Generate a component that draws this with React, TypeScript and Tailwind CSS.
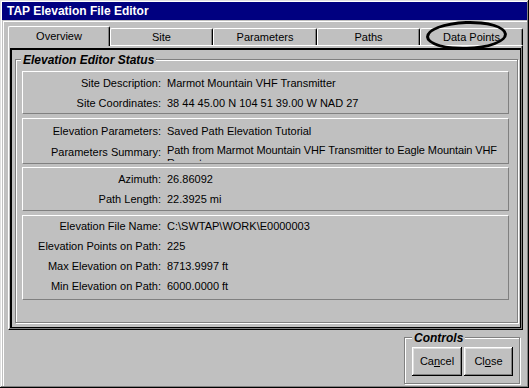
import React from "react";

const raised =
  "shadow-[inset_-1px_-1px_#000,inset_1px_1px_#dfdfdf,inset_-2px_-2px_#808080,inset_2px_2px_#fff]";
const button =
  "shadow-[inset_-1px_-1px_#000,inset_1px_1px_#fff,inset_-2px_-2px_#808080,inset_2px_2px_#dfdfdf]";
const etched = "border border-[#808080] shadow-[1px_1px_0_#fff,inset_1px_1px_0_#fff]";

const tabs = ["Overview", "Site", "Parameters", "Paths", "Data Points"];
const tabWidths = ["w-[102px]", "w-[103px]", "w-[104px]", "w-[103px]", "w-[103px]"];

function Row({ label, value }: { label: string; value: React.ReactNode }) {
  return (
    <div className="flex h-[20px] items-center">
      <div className="w-[138px] text-right">{label}</div>
      <div className="ml-[6px] whitespace-nowrap">{value}</div>
    </div>
  );
}

function Panel({ className, children }: { className: string; children: React.ReactNode }) {
  return (
    <div className={`border border-t-white border-l-white border-r-[#808080] border-b-[#808080] ${className}`}>
      {children}
    </div>
  );
}

export default function App() {
  return (
    <div
      className={`relative flex h-[388px] w-[529px] flex-col overflow-hidden bg-[#c0c0c0] p-[2px] text-[11px] text-black ${raised}`}
      style={{ fontFamily: '"Liberation Sans", Arial, sans-serif' }}
    >
      <div className="flex h-[18px] shrink-0 items-center bg-[#000080] pl-[5px] text-[12px] font-bold text-white">
        TAP Elevation File Editor
      </div>

      <div className="ml-[1px] mt-[1px] flex flex-1 flex-col border-l border-t border-l-white border-t-white">
        {/* tab strip */}
        <div className="ml-[4px] mt-[4px] flex h-[19px] items-end">
          {tabs.map((t, i) =>
            i === 0 ? (
              <div
                key={t}
                className={`relative z-10 -mb-[1px] flex h-[20px] ${tabWidths[i]} items-center justify-center rounded-tl-[2px] rounded-tr-[2px] border-l border-r border-t border-l-white border-r-black border-t-white bg-[#c0c0c0] shadow-[inset_-1px_0_#808080]`}
              >
                {t}
              </div>
            ) : (
              <div
                key={t}
                className={`flex h-[17px] ${tabWidths[i]} items-center justify-center rounded-tl-[2px] rounded-tr-[2px] border-l border-r border-t border-l-white border-r-black border-t-white shadow-[inset_-1px_0_#808080]`}
              >
                {t}
              </div>
            )
          )}
        </div>

        {/* tab page */}
        <div className="ml-[4px] flex h-[285px] w-[515px] flex-col border border-b-black border-l-white border-r-black border-t-white shadow-[inset_-1px_-1px_#808080]">
          <div className="mb-[1px] ml-[1px] mr-[1px] mt-[2px] flex flex-1 flex-col border-b border-l-2 border-r border-t-2 border-black">
            <div className={`relative mb-[4px] ml-[3px] mr-[2px] mt-[9px] flex flex-1 flex-col pl-[6px] pr-[8px] pt-[11px] ${etched}`}>
              <div className="absolute -top-[7px] left-[5px] bg-[#c0c0c0] px-[2px] text-[12px] font-bold italic leading-[14px]">
                Elevation Editor Status
              </div>

              <Panel className="h-[43px] pt-[1px]">
                <Row label="Site Description:" value="Marmot Mountain VHF Transmitter" />
                <Row label="Site Coordinates:" value="38 44 45.00 N 104 51 39.00 W NAD 27" />
              </Panel>

              <Panel className="mt-[4px] h-[46px] pt-[2px]">
                <Row label="Elevation Parameters:" value="Saved Path Elevation Tutorial" />
                <div className="flex h-[20px] items-start">
                  <div className="mt-[3px] w-[138px] text-right">Parameters Summary:</div>
                  <div className="ml-[6px] mt-[3px] h-[17px] w-[339px] overflow-hidden leading-[13px] tracking-[-0.1px]">
                    Path from Marmot Mountain VHF Transmitter to Eagle Mountain VHF Repeater
                  </div>
                </div>
              </Panel>

              <Panel className="mt-[3px] h-[44px] pt-[1px]">
                <Row label="Azimuth:" value="26.86092" />
                <Row label="Path Length:" value="22.3925 mi" />
              </Panel>

              <Panel className="mt-[4px] h-[85px]">
                <Row label="Elevation File Name:" value="C:\SWTAP\WORK\E0000003" />
                <Row label="Elevation Points on Path:" value="225" />
                <Row label="Max Elevation on Path:" value="8713.9997 ft" />
                <Row label="Min Elevation on Path:" value="6000.0000 ft" />
              </Panel>
            </div>
          </div>
        </div>

        {/* controls */}
        <div className="ml-auto mr-[7px] mt-[7px]">
          <div className={`relative flex h-[47px] w-[116px] gap-[2px] pl-[7px] pt-[9px] ${etched}`}>
            <div className="absolute -top-[7px] left-[7px] bg-[#c0c0c0] px-[2px] text-[12px] font-bold italic leading-[14px]">
              Controls
            </div>
            <button className={`h-[29px] w-[50px] bg-[#c0c0c0] ${button}`}>
              Ca<span className="underline">n</span>cel
            </button>
            <button className={`h-[29px] w-[49px] bg-[#c0c0c0] ${button}`}>
              Cl<span className="underline">o</span>se
            </button>
          </div>
        </div>
      </div>

      {/* hand-drawn highlight around the Data Points tab */}
      <div className="pointer-events-none absolute left-[426px] top-[21px] h-[29px] w-[81px] -rotate-[2deg] rounded-[50%] border-[3px] border-black" />
    </div>
  );
}
